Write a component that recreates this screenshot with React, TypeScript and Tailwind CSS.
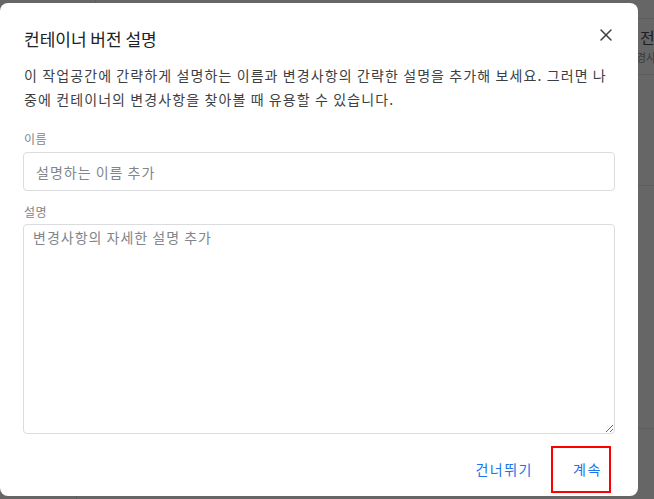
import { X } from "lucide-react";

const font = { fontFamily: '"Noto Sans CJK KR", "Noto Sans", sans-serif' };

function BackgroundPage() {
  // page content sitting under the dimmed overlay
  return (
    <div className="absolute inset-0 bg-[#666666]">
      <div className="absolute left-[638px] top-[18px] w-[40px] border-t border-[#5c5c5c]" />
      <div className="absolute left-[640px] top-[27px] whitespace-nowrap text-[16px] leading-5 text-[#1f1f1f]">전</div>
      <div className="absolute left-[636px] top-[49px] whitespace-nowrap text-[11px] leading-4 text-[#3a3a3a]">경사</div>
      <div className="absolute left-[638px] top-[74px] w-[40px] border-t border-[#5c5c5c]" />
      <div className="absolute left-[638px] top-[185px] w-[40px] border-t border-[#5c5c5c]" />
      <div className="absolute left-[638px] top-[428px] w-[40px] border-t border-[#5c5c5c]" />
      <div className="absolute left-[95px] top-0 h-[3px] border-l border-[#5c5c5c]" />
      <div className="absolute left-[76px] top-[496px] h-[3px] border-l border-[#5c5c5c]" />
    </div>
  );
}

export default function App() {
  return (
    <div className="relative w-[654px] h-[499px] overflow-hidden" style={font}>
      <BackgroundPage />

      <div className="absolute left-0 top-[3px] w-[638px] h-[493px] bg-white rounded-lg flex flex-col px-6">
        <div className="flex items-start justify-between pt-[24px]">
          <h2 className="text-[17px] leading-6 text-[#202124]">컨테이너 버전 설명</h2>
          <X className="w-5 h-5 mt-[-2px] mr-[-2px] text-[#3c4043]" strokeWidth={1.8} />
        </div>

        <p className="mt-[12px] text-[14px] leading-6 tracking-[1.1px] text-[#3c4043]">
          이 작업공간에 간략하게 설명하는 이름과 변경사항의 간략한 설명을 추가해 보세요. 그러면 나중에 컨테이너의 변경사항을 찾아볼 때 유용할 수 있습니다.
        </p>

        <label className="mt-[20px] text-[12px] leading-4 tracking-[0.5px] text-[#80868b]">이름</label>
        <input
          className="mt-[5px] w-[592px] -ml-px h-[39px] border border-[#dadce0] rounded px-[12px] text-[14px] tracking-[1px] text-[#202124] placeholder:text-[#80868b] outline-none"
          placeholder="설명하는 이름 추가"
          style={font}
        />

        <label className="mt-[13px] text-[12px] leading-4 tracking-[0.5px] text-[#80868b]">설명</label>
        <textarea
          className="mt-[4px] w-[592px] -ml-px h-[210px] border border-[#dadce0] rounded px-[9px] pt-[2px] text-[14px] leading-5 tracking-[1px] text-[#202124] placeholder:text-[#80868b] outline-none resize-y"
          placeholder="변경사항의 자세한 설명 추가"
          style={font}
        />

        <div className="flex justify-end items-center gap-[10px] mt-[12px] mr-[3px]">
          <button className="text-[14px] tracking-[1.5px] text-[#1a73e8] px-2 h-[47px]">건너뛰기</button>
          <button className="text-[14px] tracking-[1.5px] text-[#1a73e8] w-[60px] h-[47px] pl-[20px] text-left border-2 border-[#ff0000]">계속</button>
        </div>
      </div>
    </div>
  );
}
